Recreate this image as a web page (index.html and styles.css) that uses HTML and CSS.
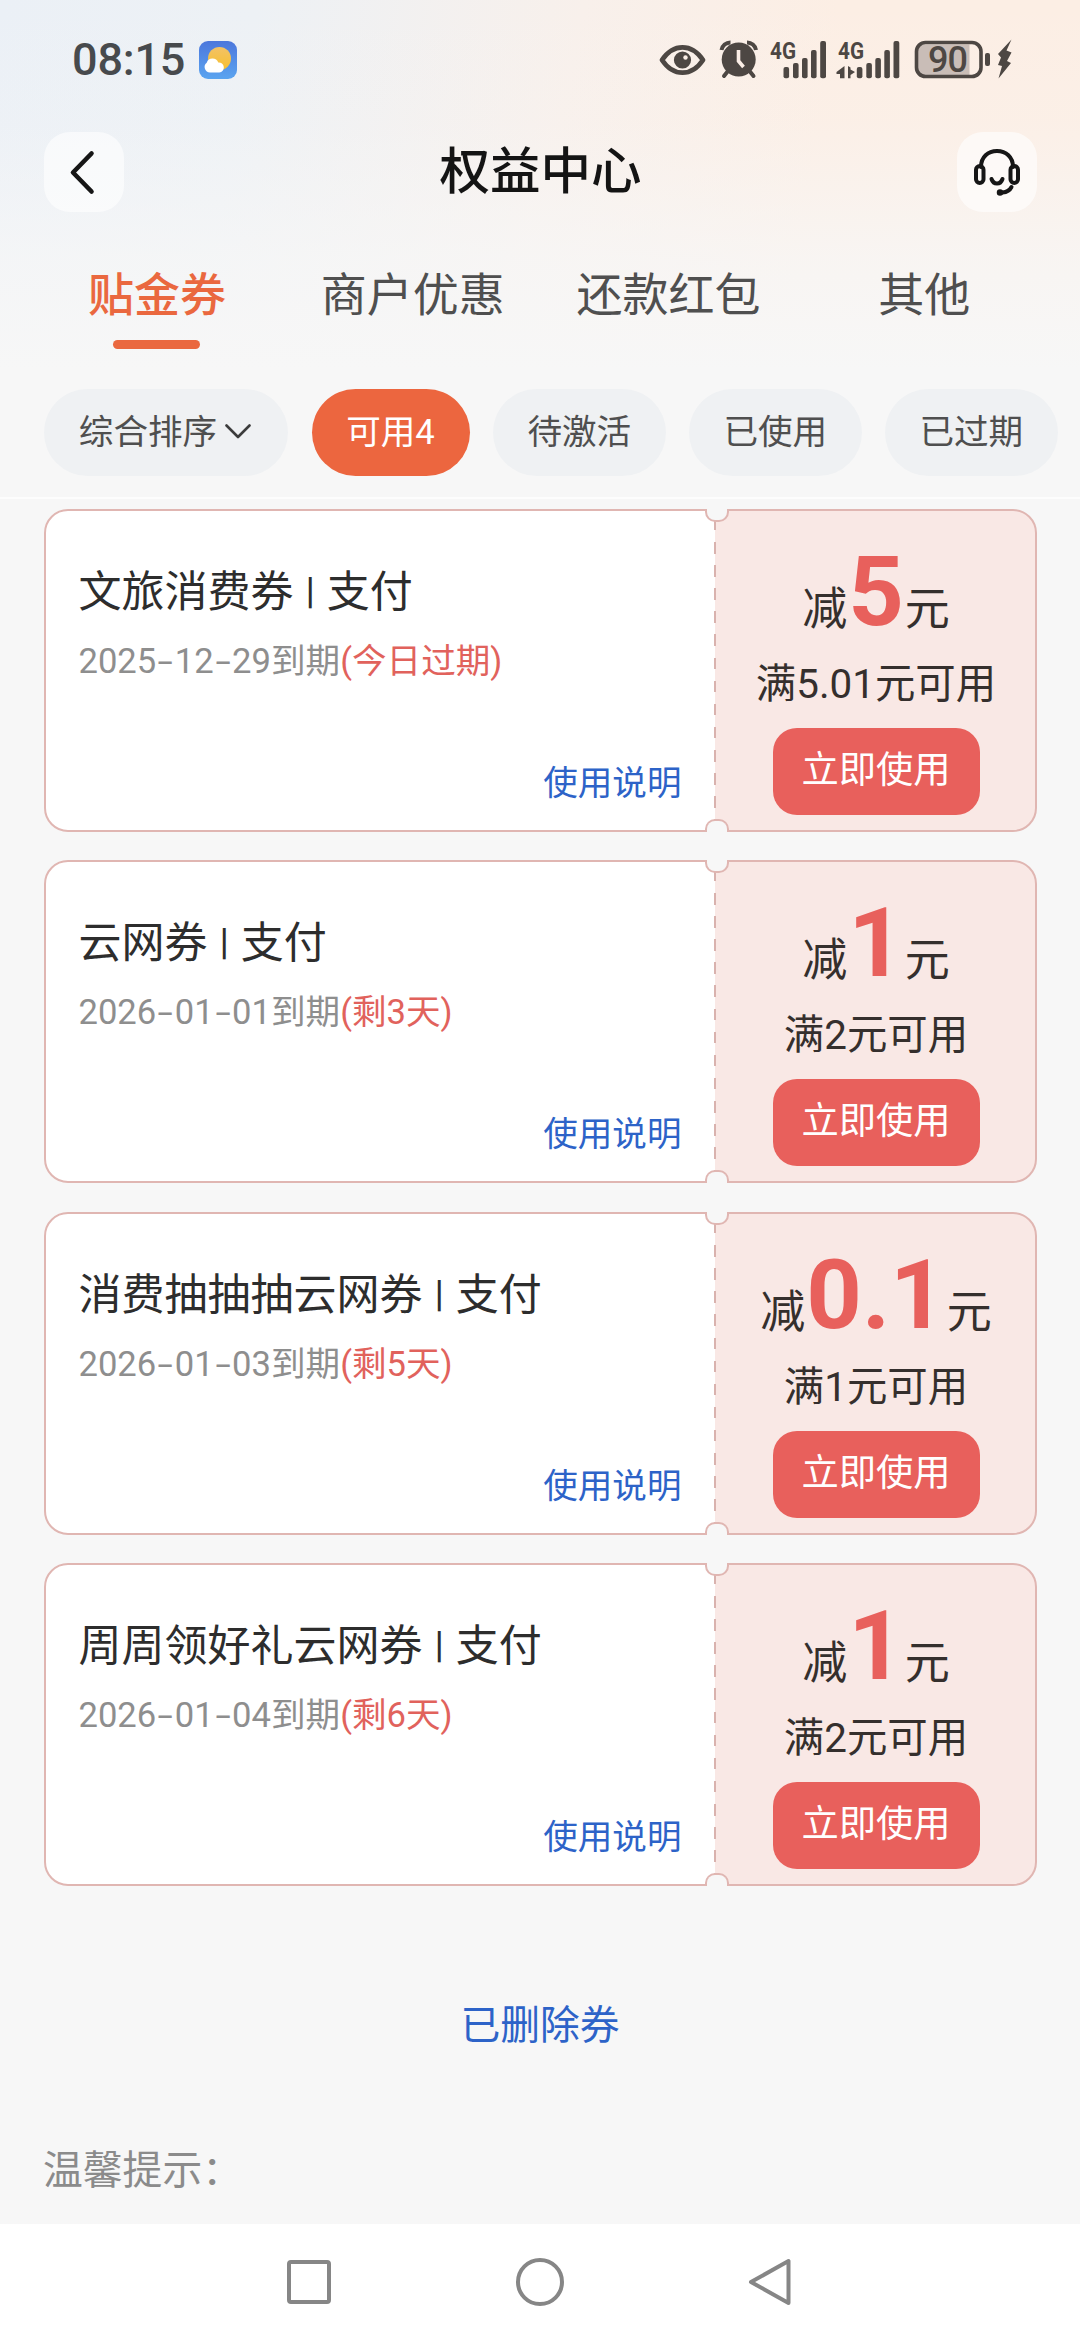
FILE: index.html
```html
<!DOCTYPE html>
<html lang="zh-CN">
<head>
<meta charset="utf-8">
<title>权益中心</title>
<link rel="stylesheet" href="styles.css">
</head>
<body>
<div class="screen">
  <header class="top">
    <div class="status">
      <span class="clock">08:15</span>
      <svg class="weather" width="38" height="38" viewBox="0 0 38 38">
        <defs>
          <linearGradient id="sky" x1="0" y1="0" x2="0" y2="1"><stop offset="0" stop-color="#4c77dc"/><stop offset="1" stop-color="#5aa4f0"/></linearGradient>
          <linearGradient id="sun" x1="0" y1="0" x2="0" y2="1"><stop offset="0" stop-color="#f3c266"/><stop offset="1" stop-color="#f6c02e"/></linearGradient>
        </defs>
        <rect width="38" height="38" rx="9" fill="url(#sky)"/>
        <circle cx="20.500" cy="17.500" r="11.500" fill="url(#sun)"/>
        <path d="M11 31.500a5.500 5.500 0 0 1-3.300-9.800 6.200 6.200 0 0 1 11.600-.2 5 5 0 0 1 1 10z" fill="#fff"/>
      </svg>
      <svg class="tray" width="360" height="48" viewBox="655 36 360 48" fill="#4d4743">
        <path d="M661 60c6-9 13-12.700 20.500-12.700s14.500 3.700 20.500 12.700c-6 9-13 12.700-20.500 12.700s-14.500-3.700-20.500-12.700z" fill="none" stroke="#4d4743" stroke-width="4.800" stroke-linejoin="round"/>
        <circle cx="681.500" cy="60" r="8.600"/><circle cx="684.500" cy="57.500" r="2.200" fill="#fbeee6"/>
        <circle cx="737.700" cy="59.500" r="17"/>
        <path d="M720.500 50a9 9 0 0 1 9-7.500M755 50a9 9 0 0 0-9-7.500" fill="none" stroke="#4d4743" stroke-width="4"/>
        <path d="M727 71l-4 5M748.500 71l4 5" stroke="#4d4743" stroke-width="4" stroke-linecap="round"/>
        <path d="M737.500 50v11l5 6" fill="none" stroke="#fbeee6" stroke-width="3.600"/>
        <text class="net" x="769" y="59" textLength="26" lengthAdjust="spacingAndGlyphs">4G</text>
        <g id="bars"><rect x="782.500" y="67" width="5.600" height="11.300" rx="2"/><rect x="792" y="63" width="5.600" height="15.300" rx="2"/><rect x="801" y="58" width="5.600" height="20.300" rx="2"/><rect x="810" y="50" width="5.600" height="28.300" rx="2"/><rect x="819.200" y="41" width="5.800" height="37.300" rx="2"/></g>
        <text class="net" x="837" y="59" textLength="26" lengthAdjust="spacingAndGlyphs">4G</text>
        <use href="#bars" x="73.300"/>
        <path d="M843.500 66v12.300H839V74h-3.500v-2zM847 66l2.500 1.500v2l4.500 2.500-4.500 3v3.300H847z"/>
        <path d="M921 44.500h47.500v31H921a5 5 0 0 1-5-5v-21a5 5 0 0 1 5-5z" fill="#c9bdb7"/>
        <rect x="915.500" y="42.500" width="64.500" height="34" rx="9" fill="none" stroke="#4d4743" stroke-width="3.600"/>
        <text class="pct" x="927" y="71.500" textLength="40">90</text>
        <rect x="984" y="53" width="5" height="13" rx="2"/>
        <path d="M1010.500 39.500L997 54l3 3.500-3 7.500 4 1-3.500 12.500 12.500-15.500-4-2 4.500-8.500-5-2z"/>
      </svg>
    </div>
    <div class="titlebar">
      <div class="round-btn"><svg width="80" height="80" viewBox="0 0 80 80"><path d="M47.500 21.500L29 40.500l18.500 19" fill="none" stroke="#161616" stroke-width="4.600" stroke-linecap="round" stroke-linejoin="round"/></svg></div>
      <h1 class="title">权益中心</h1>
      <div class="round-btn"><svg width="80" height="80" viewBox="0 0 80 80" fill="none" stroke="#161616" stroke-width="4" stroke-linecap="round"><path d="M24 35c0-10 7-16 16-16s16 6 16 16"/><rect x="19" y="34" width="7.500" height="17" rx="3.750"/><rect x="53.500" y="34" width="7.500" height="17" rx="3.750"/><path d="M34.500 47c2 6 9 6 11 0M54.500 55c-1.500 3-4 5-9 5.500"/><circle cx="43" cy="60.500" r="2" fill="#161616" stroke-width="2.500"/></svg></div>
    </div>
    <nav class="tabs">
      <div class="tab active">贴金券</div>
      <div class="tab">商户优惠</div>
      <div class="tab">还款红包</div>
      <div class="tab">其他</div>
    </nav>
    <div class="chips">
      <div class="chip sort">综合排序<svg width="26" height="16" viewBox="0 0 26 16"><path d="M1.500 1.500L13 13 24.500 1.500" fill="none" stroke="#3c3c3c" stroke-width="2.600" stroke-linecap="round" stroke-linejoin="round"/></svg></div>
      <div class="chip on">可用4</div>
      <div class="chip">待激活</div>
      <div class="chip">已使用</div>
      <div class="chip">已过期</div>
    </div>
  </header>
  <main class="list">
    <article class="coupon">
      <div class="info">
        <h2 class="name">文旅消费券 <span class="bar">|</span> 支付</h2>
        <p class="date">2025<i class="dash">-</i>12<i class="dash">-</i>29到期<span class="left">(今日过期)</span></p>
        <a class="rule">使用说明</a>
      </div>
      <div class="deal">
        <div class="amount">减<b>5</b>元</div>
        <div class="cond">满5.01元可用</div>
        <div class="use">立即使用</div>
      </div>
    </article>
    <article class="coupon">
      <div class="info">
        <h2 class="name">云网券 <span class="bar">|</span> 支付</h2>
        <p class="date">2026<i class="dash">-</i>01<i class="dash">-</i>01到期<span class="left">(剩3天)</span></p>
        <a class="rule">使用说明</a>
      </div>
      <div class="deal">
        <div class="amount">减<b>1</b>元</div>
        <div class="cond">满2元可用</div>
        <div class="use">立即使用</div>
      </div>
    </article>
    <article class="coupon">
      <div class="info">
        <h2 class="name">消费抽抽抽云网券 <span class="bar">|</span> 支付</h2>
        <p class="date">2026<i class="dash">-</i>01<i class="dash">-</i>03到期<span class="left">(剩5天)</span></p>
        <a class="rule">使用说明</a>
      </div>
      <div class="deal">
        <div class="amount">减<b>0<span class="dot">.</span>1</b>元</div>
        <div class="cond">满1元可用</div>
        <div class="use">立即使用</div>
      </div>
    </article>
    <article class="coupon">
      <div class="info">
        <h2 class="name">周周领好礼云网券 <span class="bar">|</span> 支付</h2>
        <p class="date">2026<i class="dash">-</i>01<i class="dash">-</i>04到期<span class="left">(剩6天)</span></p>
        <a class="rule">使用说明</a>
      </div>
      <div class="deal">
        <div class="amount">减<b>1</b>元</div>
        <div class="cond">满2元可用</div>
        <div class="use">立即使用</div>
      </div>
    </article>
  </main>
  <a class="deleted">已删除券</a>
  <p class="tips">温馨提示：</p>
  <footer class="sysnav">
    <svg width="48" height="52" viewBox="0 0 48 52"><rect x="4" y="6" width="40" height="40" rx="2"/></svg>
    <svg width="52" height="52" viewBox="0 0 52 52"><circle cx="26" cy="26" r="22"/></svg>
    <svg width="48" height="52" viewBox="0 0 48 52"><path d="M41.500 5v42L4 26z"/></svg>
  </footer>
</div>
</body>
</html>
```
FILE: styles.css
```css
* { box-sizing: border-box; margin: 0; padding: 0; }
body {
  width: 1080px;
  height: 2340px;
  overflow: hidden;
  background: #f7f7f7;
  font-family: Roboto, "Noto Sans CJK SC", sans-serif;
  color: #4f4f4f;
}
.screen { display: flex; flex-direction: column; height: 2340px; }

.top {
  height: 499px;
  border-bottom: 2px solid #fdfdfd;
  background:
    linear-gradient(180deg, rgba(247,247,247,0) 0, rgba(247,247,247,.15) 120px, rgba(247,247,247,.75) 260px, #f7f7f7 370px),
    linear-gradient(100deg, #ebf0f6 0, #edf1f5 22%, #f8f0eb 50%, #fceee4 72%, #fceee4 100%);
}
.status { display: flex; align-items: center; height: 120px; padding: 0 64px 0 72px; }
.clock { font-size: 45px; font-weight: 500; letter-spacing: -.2px; line-height: 50px; color: #474a4d; width: 127px; }
.weather { display: block; }
.tray { display: block; margin-left: auto; margin-right: 0; }
.net { font: 700 24px Roboto, sans-serif; }
.pct { font: 500 36px Roboto, sans-serif; }

.titlebar { display: flex; justify-content: space-between; align-items: center; height: 104px; padding: 0 43px 0 44px; }
.round-btn { width: 80px; height: 80px; border-radius: 26px; background: rgba(255,255,255,.6); }
.round-btn svg { display: block; }
.title { font-size: 50.5px; font-weight: 500; line-height: 60px; color: #141414; }

.tabs { display: flex; height: 165px; padding: 41px 28px 0 29px; }
.tab { flex: 1; display: flex; flex-direction: column; align-items: center; font-size: 46px; line-height: 60px; }
.tab.active { color: #ea683f; font-weight: 500; }
.tab.active::after { content: ""; width: 87px; height: 9px; margin-top: 15px; border-radius: 5px; background: #ea683f; }

.chips { display: flex; gap: 23.500px; padding-left: 44px; }
.chip { flex: none; height: 87px; width: 172.500px; border-radius: 44px; background: #eff1f3; display: flex; justify-content: center; align-items: center; padding-bottom: 8px; font-size: 34.600px; }
.chip.sort { width: 244px; gap: 8px; padding-right: 2px; }
.chip.sort svg { position: relative; top: 3px; }
.chip.on { width: 158px; background: #ec663f; color: #fff; }

.list { display: flex; flex-direction: column; gap: 28.400px; padding: 10px 43.500px 0; }
.coupon {
  position: relative;
  display: flex;
  height: 323px;
  border: 2px solid #e0b6b2;
  border-radius: 24px;
  background: linear-gradient(90deg, #fff 669px, #f9e8e5 669px);
}
.coupon::before, .coupon::after {
  content: "";
  position: absolute;
  left: 659px;
  width: 20px;
  height: 11px;
  border: 2px solid #e0b6b2;
  background: #f7f7f7;
}
.coupon::before { top: -2px; border-top: 0; border-radius: 0 0 10px 10px; }
.coupon::after { bottom: -2px; border-bottom: 0; border-radius: 10px 10px 0 0; }
.info { width: 668px; display: flex; flex-direction: column; padding: 51px 32px 0 33px; }
.name { font-size: 43px; font-weight: 400; line-height: 60px; color: #2d2d2d; white-space: pre; }
.bar { display: inline-block; width: 12px; text-align: center; font-size: 36px; font-weight: 500; vertical-align: 4px; line-height: 40px; }
.date { margin-top: 14px; font-size: 34.600px; line-height: 50px; color: #8e8e8e; }
.dash { display: inline-block; width: 18.500px; text-align: center; font-style: normal; transform: scaleX(1.6); }
.left { color: #e1625c; }
.rule { margin-top: 72px; text-align: right; font-size: 34.600px; line-height: 50px; color: #2d63c8; }
.deal {
  flex: 1;
  display: flex;
  flex-direction: column;
  align-items: center;
  margin: 8px 0;
  padding-left: 4px;
  color: #352f2d;
  background: repeating-linear-gradient(180deg, #d9b2ae 0 11.500px, transparent 11.500px 23.100px) 0 0 / 2px 100% no-repeat;
}
.amount { height: 136px; display: flex; align-items: baseline; font-size: 45px; line-height: 136px; padding-top: 5px; }
.amount b { font-size: 97px; font-weight: 700; color: #e8605c; padding: 0 1px; }
.dot { display: inline-block; width: 28px; text-align: center; }
.cond { margin-top: 5px; font-size: 40.400px; line-height: 50px; }
.use { margin-top: 18px; width: 207px; height: 87px; padding-bottom: 9px; border-radius: 24px; background: #e8605c; color: #fff; font-size: 37.300px; display: flex; align-items: center; justify-content: center; }

.deleted { align-self: center; margin-top: 115px; font-size: 39.800px; line-height: 50px; color: #2d63c8; }
.tips { padding-left: 43px; margin-top: 95px; font-size: 39.800px; line-height: 50px; color: #8b8b8b; }
.sysnav { margin-top: auto; height: 116px; background: #fff; display: flex; justify-content: center; gap: 181px; padding-top: 32px; }
.sysnav svg { fill: none; stroke: #868686; stroke-width: 4; stroke-linejoin: round; }
```
